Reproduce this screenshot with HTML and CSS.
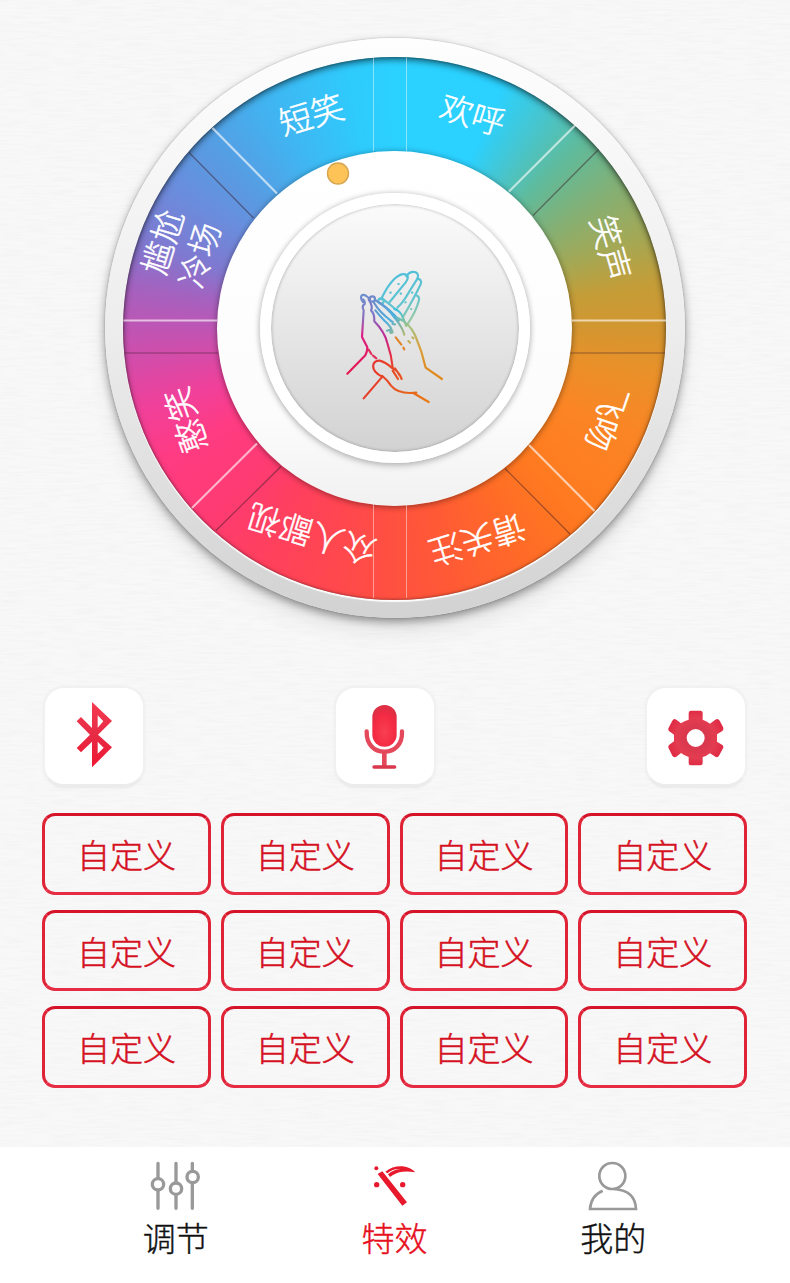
FILE: index.html
```html
<!DOCTYPE html>
<html lang="zh-CN">
  <head>
    <meta charset="UTF-8" />
    <meta name="viewport" content="width=device-width, initial-scale=1.0" />
    <title>特效</title>
    <link rel="stylesheet" href="styles.css">
  </head>
  <body>
    <svg class="paper" width="790" height="1147" aria-hidden="true">
      <filter id="grain" x="0" y="0" width="100%" height="100%">
        <feTurbulence type="fractalNoise" baseFrequency="0.04 0.42" numOctaves="2" seed="4" />
        <feColorMatrix values="0 0 0 0 0.5  0 0 0 0 0.5  0 0 0 0 0.5  0.15 0 0 0 -0.055" />
      </filter>
      <rect width="790" height="1147" filter="url(#grain)" />
    </svg>
    <main>
      <section class="wheel">
        <div class="ring"></div>
        <div class="hub"></div>
        <div class="knob"></div>
        <svg class="dial" viewBox="105 37 580 580">
          <defs>
            <linearGradient id="fingers" gradientUnits="userSpaceOnUse" x1="170" y1="60" x2="235" y2="190">
              <stop offset="0" stop-color="#4fbfd9" />
              <stop offset=".55" stop-color="#62c4cf" />
              <stop offset="1" stop-color="#a4c99a" />
            </linearGradient>
            <linearGradient id="palm" gradientUnits="userSpaceOnUse" x1="80" y1="110" x2="130" y2="330">
              <stop offset="0" stop-color="#6f8fcf" />
              <stop offset=".28" stop-color="#8b70bd" />
              <stop offset=".5" stop-color="#dc1d85" />
              <stop offset="1" stop-color="#e6194b" />
            </linearGradient>
            <linearGradient id="edge" gradientUnits="userSpaceOnUse" x1="110" y1="160" x2="180" y2="325">
              <stop offset="0" stop-color="#7a7bc8" />
              <stop offset=".45" stop-color="#c32592" />
              <stop offset=".75" stop-color="#e52b4c" />
              <stop offset="1" stop-color="#e84a20" />
            </linearGradient>
            <linearGradient id="wrist" gradientUnits="userSpaceOnUse" x1="185" y1="150" x2="275" y2="330">
              <stop offset="0" stop-color="#3bbfe0" />
              <stop offset=".3" stop-color="#a5c382" />
              <stop offset=".65" stop-color="#d9a13c" />
              <stop offset="1" stop-color="#e08a1e" />
            </linearGradient>
            <linearGradient id="inner" gradientUnits="userSpaceOnUse" x1="110" y1="115" x2="210" y2="225">
              <stop offset="0" stop-color="#7188cb" />
              <stop offset=".55" stop-color="#4aafe0" />
              <stop offset="1" stop-color="#b4ba70" />
            </linearGradient>
            <linearGradient id="thumb" gradientUnits="userSpaceOnUse" x1="100" y1="320" x2="280" y2="425">
              <stop offset="0" stop-color="#e6312e" />
              <stop offset="1" stop-color="#e87b13" />
            </linearGradient>
          </defs>

          <!-- pairs of grooves between the sectors -->
          <g class="groove-thin">
            <path d="M373.500 57.500V151M406.500 57.500V151M373.500 504V598M406.500 504V598" />
          </g>
          <g class="groove-light">
            <path d="M212.500 128 277 193.500M575 125.500 509 191.500M257 443.500 192 508M529 445 594.500 511M123.500 320.500H217M572 320.500H666" />
          </g>
          <g class="groove-dark">
            <path d="M189 152.500 253.500 218M598.500 149.500 533 215.500M281 466.500 216 530.500M505 468.500 570 534M124.500 353H218M570.500 353H665" />
          </g>

          <circle class="pointer" cx="338" cy="173.500" r="10.500" />

          <g class="labels">
            <text transform="translate(311.500 115) rotate(-17)" dy="12">短笑</text>
            <text transform="translate(472.500 115) rotate(17)" dy="12">欢呼</text>
            <text transform="translate(610.500 248) rotate(74)" dy="12">笑声</text>
            <text transform="translate(607 418) rotate(109)" dy="12">飞吻</text>
            <text transform="translate(477.500 539.500) rotate(163)" dy="12">请关注</text>
            <text transform="translate(312 534) rotate(197)" dy="12">众人鄙视</text>
            <text transform="translate(186 420) rotate(251)" dy="12">憨笑</text>
            <text transform="translate(163 242) rotate(-73)" dy="12">尴尬</text>
            <text transform="translate(200 255) rotate(-73)" dy="12">冷场</text>
          </g>

          <svg class="hands" x="335" y="260" width="120" height="150" viewBox="0 0 360 450">
            <g stroke="url(#fingers)">
              <path d="M138 118Q158 76 178 57Q199 37 214 44Q224 51 212 67L164 126" />
              <path d="M214 49Q225 32 242 37Q254 43 246 58Q223 94 210 116Q199 133 187 143" />
              <path d="M247 56Q262 58 257 73Q236 117 205 169" />
              <path d="M243 106Q256 110 251 124Q242 157 219 190" />
              <circle cx="138" cy="123" r="8" />
              <path d="M146 119Q166 134 184 150M190 72h1M166 98h1M197 101h1M231 98h1M211 127h1M228 147h1" />
            </g>
            <path d="M84 126C72 110 80 99 94 108Q103 115 105 118M84 118Q91 123 89 132Q79 139 86 151L81 231 97 262Q97 275 91 286L37 341" stroke="url(#palm)" />
            <path d="M101 118Q115 140 108 151Q119 160 118 184Q149 216 157 249Q170 287 173 323" stroke="url(#edge)" />
            <g stroke="url(#inner)">
              <circle cx="112" cy="117" r="8" />
              <path d="M120 120Q155 139 181 176Q203 204 208 224M121 151Q145 180 158 191 170 203 173 217M116 127Q133 157 170 184M166 182l7 3 0 7 7 1M156 212l9-3 2 10 6-2M139 132Q167 151 192 181" />
            </g>
            <g stroke="url(#wrist)">
              <path d="M178 147Q195 151 203 171L214 198M190 175Q222 189 240 225Q261 273 272 323L321 357" />
              <path d="M220 243l5 5M232 232l3 3" />
            </g>
            <path d="M182 232 199 254M205 263l3 5" stroke="#e0852c" />
            <path d="M101 269 109 282M114 287l10 8" stroke="#df315b" />
            <path d="M86 415 142 350C101 330 112 300 134 302Q151 306 173 325Q190 332 200 357M142 348Q157 360 168 377Q190 404 244 398M235 399 281 426M173 332l16 25M180 325l14 21" stroke="url(#thumb)" />
          </svg>
        </svg>
      </section>

      <section class="tools">
        <button class="tool" aria-label="蓝牙">
          <svg viewBox="39 33 306 306">
            <linearGradient id="bt" x2="0" y2="1"><stop offset="0" stop-color="#f53b50" /><stop offset=".5" stop-color="#e72b45" /><stop offset="1" stop-color="#f01731" /></linearGradient>
            <path fill="url(#bt)" fill-rule="evenodd" d="M186 81 246 138 204 179 246 217 186 277V200L153 232 140 219 180 179 140 139 153 126 186 159ZM203 121V158L220 139ZM203 200V236L221 218Z" />
          </svg>
        </button>
        <button class="tool" aria-label="麦克风">
          <svg viewBox="43 33 306 306">
            <radialGradient id="mic" cy=".65" r=".65"><stop offset="0" stop-color="#f83f50" /><stop offset=".65" stop-color="#f42a43" /><stop offset="1" stop-color="#da3045" /></radialGradient>
            <rect x="158" y="90" width="73" height="125" rx="36" fill="url(#mic)" />
            <path d="M141 169C140 209 164 230 194 230S249 209 247 169" fill="none" stroke="#e4485b" stroke-width="13" stroke-linecap="round" />
            <path d="M194 232V275" stroke="#e4485b" stroke-width="14" />
            <path d="M163 276H225" stroke="#d9374c" stroke-width="10" stroke-linecap="round" />
          </svg>
        </button>
        <button class="tool" aria-label="设置">
          <svg viewBox="45 33 306 306">
            <radialGradient id="gear" r=".55"><stop offset="0" stop-color="#cf344b" /><stop offset=".65" stop-color="#e33c50" /><stop offset="1" stop-color="#df2742" /></radialGradient>
            <path fill="url(#gear)" fill-rule="evenodd" d="M182 107H211Q218 107 218 115V134Q230 138 240 146L256 134Q264 129 269 137L279 156Q282 163 277 168L261 178V200L277 210Q282 214 279 220L267 242Q263 249 256 245L240 235Q230 243 218 246V264Q218 271 211 271H182Q176 271 176 264V246Q163 242 153 234L139 245Q131 249 127 242L116 220Q113 213 118 209L132 199V179L118 169Q113 165 116 158L127 137Q131 129 139 134L153 145Q163 137 176 134V115Q176 107 182 107ZM197 162A27 27 0 1 0 197 216A27 27 0 1 0 197 162Z" />
          </svg>
        </button>
      </section>

      <section class="slots">
        <button class="slot">自定义</button>
        <button class="slot">自定义</button>
        <button class="slot">自定义</button>
        <button class="slot">自定义</button>
        <button class="slot">自定义</button>
        <button class="slot">自定义</button>
        <button class="slot">自定义</button>
        <button class="slot">自定义</button>
        <button class="slot">自定义</button>
        <button class="slot">自定义</button>
        <button class="slot">自定义</button>
        <button class="slot">自定义</button>
      </section>
    </main>

    <nav class="tabs">
      <a class="tab">
        <svg viewBox="62 60 156 156" fill="none" stroke="#999" stroke-width="10" stroke-linecap="round">
          <path d="M86 70V115M86 152V205M140 70V128M140 165V205M189 70V92M189 130V205" />
          <circle cx="86" cy="133" r="17" />
          <circle cx="140" cy="146" r="17" />
          <circle cx="190" cy="111" r="17" />
        </svg>
        <span>调节</span>
      </a>
      <a class="tab active">
        <svg viewBox="715 60 156 156" fill="#e8192d">
          <path d="M744 102 758 94 832 187 818 197ZM767 95Q790 77 819 79 843 82 857 97 837 93 819 95 798 97 781 111L775 103Q793 88 812 87 791 85 773 100Z" />
          <circle cx="740" cy="85" r="6" />
          <circle cx="741" cy="134" r="8" />
          <circle cx="819" cy="134" r="8" />
        </svg>
        <span>特效</span>
      </a>
      <a class="tab">
        <svg viewBox="82 60 156 156" fill="none" stroke="#999" stroke-width="8">
          <circle cx="158" cy="108" r="39" />
          <path d="M129 152Q94 167 91 207H229Q227 152 164 147" />
        </svg>
        <span>我的</span>
      </a>
    </nav>
  </body>
</html>
```
FILE: styles.css
```css
* {
  box-sizing: border-box;
}

body {
  margin: 0;
  width: 790px;
  height: 1283px;
  display: flex;
  flex-direction: column;
  overflow: hidden;
  background: #f8f8f8;
  font-family: "Noto Sans CJK SC", sans-serif;
  font-weight: 300;
}

button {
  margin: 0;
  padding: 0;
  border: 0;
  background: none;
  font: inherit;
}

svg {
  display: block;
}

/* paper texture behind everything above the tab bar */
.paper {
  position: absolute;
  top: 0;
  left: 0;
  z-index: -1;
}

main {
  flex: 1;
  padding: 38px 43px 0 42px;
}

/* wheel */
.wheel {
  width: 580px;
  height: 580px;
  margin: 0 auto;
  display: grid;
  place-items: center;
  border-radius: 50%;
  background: linear-gradient(#fefefe, #ededed 50%, #d2d2d2);
  box-shadow: 0 0 2px rgba(0, 0, 0, 0.25), 0 4px 8px rgba(0, 0, 0, 0.38), 0 14px 22px rgba(0, 0, 0, 0.08);
}

.wheel > * {
  grid-area: 1 / 1;
}

.ring {
  width: 543px;
  height: 543px;
  border-radius: 50%;
  background: conic-gradient(
    #2bd1ff 0deg,
    #2bd1ff 24deg,
    #45c6d2 34deg,
    #5fbb9c 45deg,
    #82b076 57deg,
    #a5a854 70deg,
    #c49d38 80deg,
    #d39630 90deg,
    #e8912a 99deg,
    #fb8524 114deg,
    #ff7a20 135deg,
    #ff6b27 150deg,
    #ff5a35 167deg,
    #ff5140 180deg,
    #ff474f 195deg,
    #ff3f60 212deg,
    #ff3b74 225deg,
    #ff3b82 240deg,
    #f1409a 252deg,
    #d64ba8 262deg,
    #bf55b4 270deg,
    #a462bf 279deg,
    #7f79d0 289deg,
    #6b8cdc 302deg,
    #569de3 315deg,
    #40b5f1 331deg,
    #2ecbfd 350deg,
    #2bd1ff 360deg
  );
  box-shadow: 0 2px 1px rgba(255, 255, 255, 0.95), inset 0 3px 6px rgba(0, 0, 0, 0.5), inset 0 0 3px rgba(0, 0, 0, 0.4);
}

.hub {
  width: 355px;
  height: 355px;
  border-radius: 50%;
  background: linear-gradient(#fff, #fcfcfc 75%, #f1f1f1);
  box-shadow: 0 1px 6px rgba(0, 0, 0, 0.45);
}

.knob {
  width: 270px;
  height: 270px;
  border: 11px solid #fff;
  border-radius: 50%;
  background: linear-gradient(#fbfbfb, #d2d2d2) padding-box;
  box-shadow: 0 0 5px 1px rgba(0, 0, 0, 0.15), 0 3px 7px rgba(0, 0, 0, 0.18), inset 0 0 3px 1px rgba(0, 0, 0, 0.2);
}

.dial {
  width: 580px;
  height: 580px;
  margin-top: -2px;
}

.groove-thin {
  stroke: rgba(255, 255, 255, 0.45);
  stroke-width: 1;
}

.groove-light {
  stroke: rgba(255, 255, 255, 0.62);
  stroke-width: 2.2;
}

.groove-dark {
  stroke: rgba(60, 30, 40, 0.5);
  stroke-width: 1.2;
}

.pointer {
  fill: #fdc357;
  stroke: #d6a550;
  stroke-width: 1.4;
}

.labels {
  fill: #fff;
  stroke: #fff;
  stroke-width: 0.5;
  font-size: 33px;
  text-anchor: middle;
}

.hands {
  fill: none;
  stroke-width: 6.5;
  stroke-linecap: round;
  stroke-linejoin: round;
}

/* round tool buttons */
.tools {
  display: grid;
  grid-template-columns: 102px 102px 102px;
  column-gap: 188.500px;
  padding: 68px 0 0 1px;
}

.tool {
  width: 102px;
  height: 102px;
  border: 2px solid #f1f1f1;
  border-bottom: 4px solid #ececec;
  border-radius: 21px;
  background: #fff;
  box-shadow: 0 0 2px 1px rgba(0, 0, 0, 0.02);
}

.tool:last-child {
  margin-left: 20.500px;
}

.tool svg {
  width: 102px;
  height: 102px;
  margin: -2px 0 -4px -2px;
}

/* custom slots */
.slots {
  display: grid;
  grid-template-columns: repeat(4, 1fr);
  grid-auto-rows: 81.500px;
  gap: 15px 10px;
  padding-top: 25px;
}

.slot {
  border: 3px solid #e02438;
  border-top-color: #d5142a;
  border-bottom-color: #e52c42;
  border-radius: 13px;
  color: #d5101f;
  font-size: 33px;
  line-height: 74px;
  padding-top: 1px;
  -webkit-text-stroke: 0.5px;
}

/* bottom tabs */
.tabs {
  height: 136px;
  padding: 13px 67.500px 0 66.500px;
  display: grid;
  grid-template-columns: repeat(3, 1fr);
  background: #fff;
}

.tab {
  display: flex;
  flex-direction: column;
  align-items: center;
  color: #111;
  font-size: 33px;
  line-height: 51px;
  -webkit-text-stroke: 0.4px;
}

.tab svg {
  width: 52px;
  height: 52px;
}

.active {
  color: #e60f20;
}
```
